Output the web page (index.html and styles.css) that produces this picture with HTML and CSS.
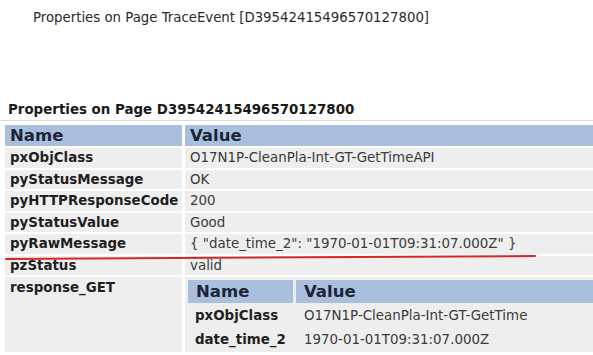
FILE: index.html
```html
<!DOCTYPE html>
<html>
<head>
<meta charset="utf-8">
<link rel="stylesheet" href="styles.css">
</head>
<body>
<div class="trace-title">Properties on Page TraceEvent [D39542415496570127800]</div>
<div class="section">
  <div class="page-heading">Properties on Page D39542415496570127800</div>
  <div class="table-wrap">
    <table class="props">
      <tr><th class="col-name">Name</th><th>Value</th></tr>
      <tr><td class="name">pxObjClass</td><td class="val">O17N1P-CleanPla-Int-GT-GetTimeAPI</td></tr>
      <tr><td class="name">pyStatusMessage</td><td class="val">OK</td></tr>
      <tr><td class="name">pyHTTPResponseCode</td><td class="val">200</td></tr>
      <tr><td class="name">pyStatusValue</td><td class="val">Good</td></tr>
      <tr><td class="name">pyRawMessage</td><td class="val">{ "date_time_2": "1970-01-01T09:31:07.000Z" }</td></tr>
      <tr><td class="name">pzStatus</td><td class="val">valid</td></tr>
      <tr><td class="name top">response_GET</td><td class="val nested-cell">
        <table class="inner">
          <tr><th class="inner-name">Name</th><th>Value</th></tr>
          <tr><td class="name">pxObjClass</td><td class="val">O17N1P-CleanPla-Int-GT-GetTime</td></tr>
          <tr><td class="name">date_time_2</td><td class="val">1970-01-01T09:31:07.000Z</td></tr>
        </table>
      </td></tr>
    </table>
    <div class="annot-line"></div>
  </div>
</div>
</body>
</html>
```
FILE: styles.css
```css
html, body {
  margin: 0;
  padding: 0;
  background: #ffffff;
}
body {
  font-family: "DejaVu Sans", Verdana, sans-serif;
  color: #333333;
  width: 593px;
  overflow: hidden;
}
.trace-title {
  font-size: 13.3px;
  padding: 9px 0 0 33px;
  height: 20px;
  line-height: 17px;
  color: #2a2a2a;
}
.section {
  padding-top: 72px;
}
.page-heading {
  font-weight: bold;
  font-size: 13.4px;
  line-height: 17px;
  padding-left: 8px;
  color: #1a1a1a;
}
.table-wrap {
  position: relative;
  margin-top: 2px;
  border-top: 1px solid #dcdcd2;
  width: 620px;
}
.props {
  border-collapse: separate;
  border-spacing: 3px 2px;
  margin-left: 2px;
  margin-top: 2px;
  width: 620px;
}
.props th, .inner th {
  background: #a9bfdd;
  text-align: left;
  font-size: 16.5px;
  font-weight: bold;
  color: #1c2538;
  height: 21px;
  padding: 0 0 0 5px;
  line-height: 21px;
}
.props .col-name {
  width: 172px;
}
.props td {
  background: #eeeeee;
  font-size: 13.4px;
  height: 19.5px;
  line-height: 19px;
  padding: 0 0 0 5px;
  vertical-align: middle;
}
td.name {
  font-weight: bold;
  color: #1f1f1f;
}
td.val {
  color: #3a3a3a;
}
td.top {
  vertical-align: top;
  padding-top: 1px;
}
.props td.nested-cell {
  padding: 1px 0 0 0;
}
.inner {
  border-collapse: separate;
  border-spacing: 3px 2px;
  width: 100%;
}
.inner th {
  height: 23px;
  line-height: 23px;
  padding-left: 8px;
}
.inner .inner-name {
  width: 97px;
}
.inner td {
  height: 20.5px;
  line-height: 20px;
  padding-left: 7px;
  padding-top: 1px;
}
.inner td.val {
  padding-left: 8px;
}
.annot-line {
  position: absolute;
  left: 5px;
  top: 137px;
  width: 531px;
  height: 2px;
  background: #d42828;
  transform: rotate(-0.32deg);
  transform-origin: left center;
  border-radius: 1px;
}
```
